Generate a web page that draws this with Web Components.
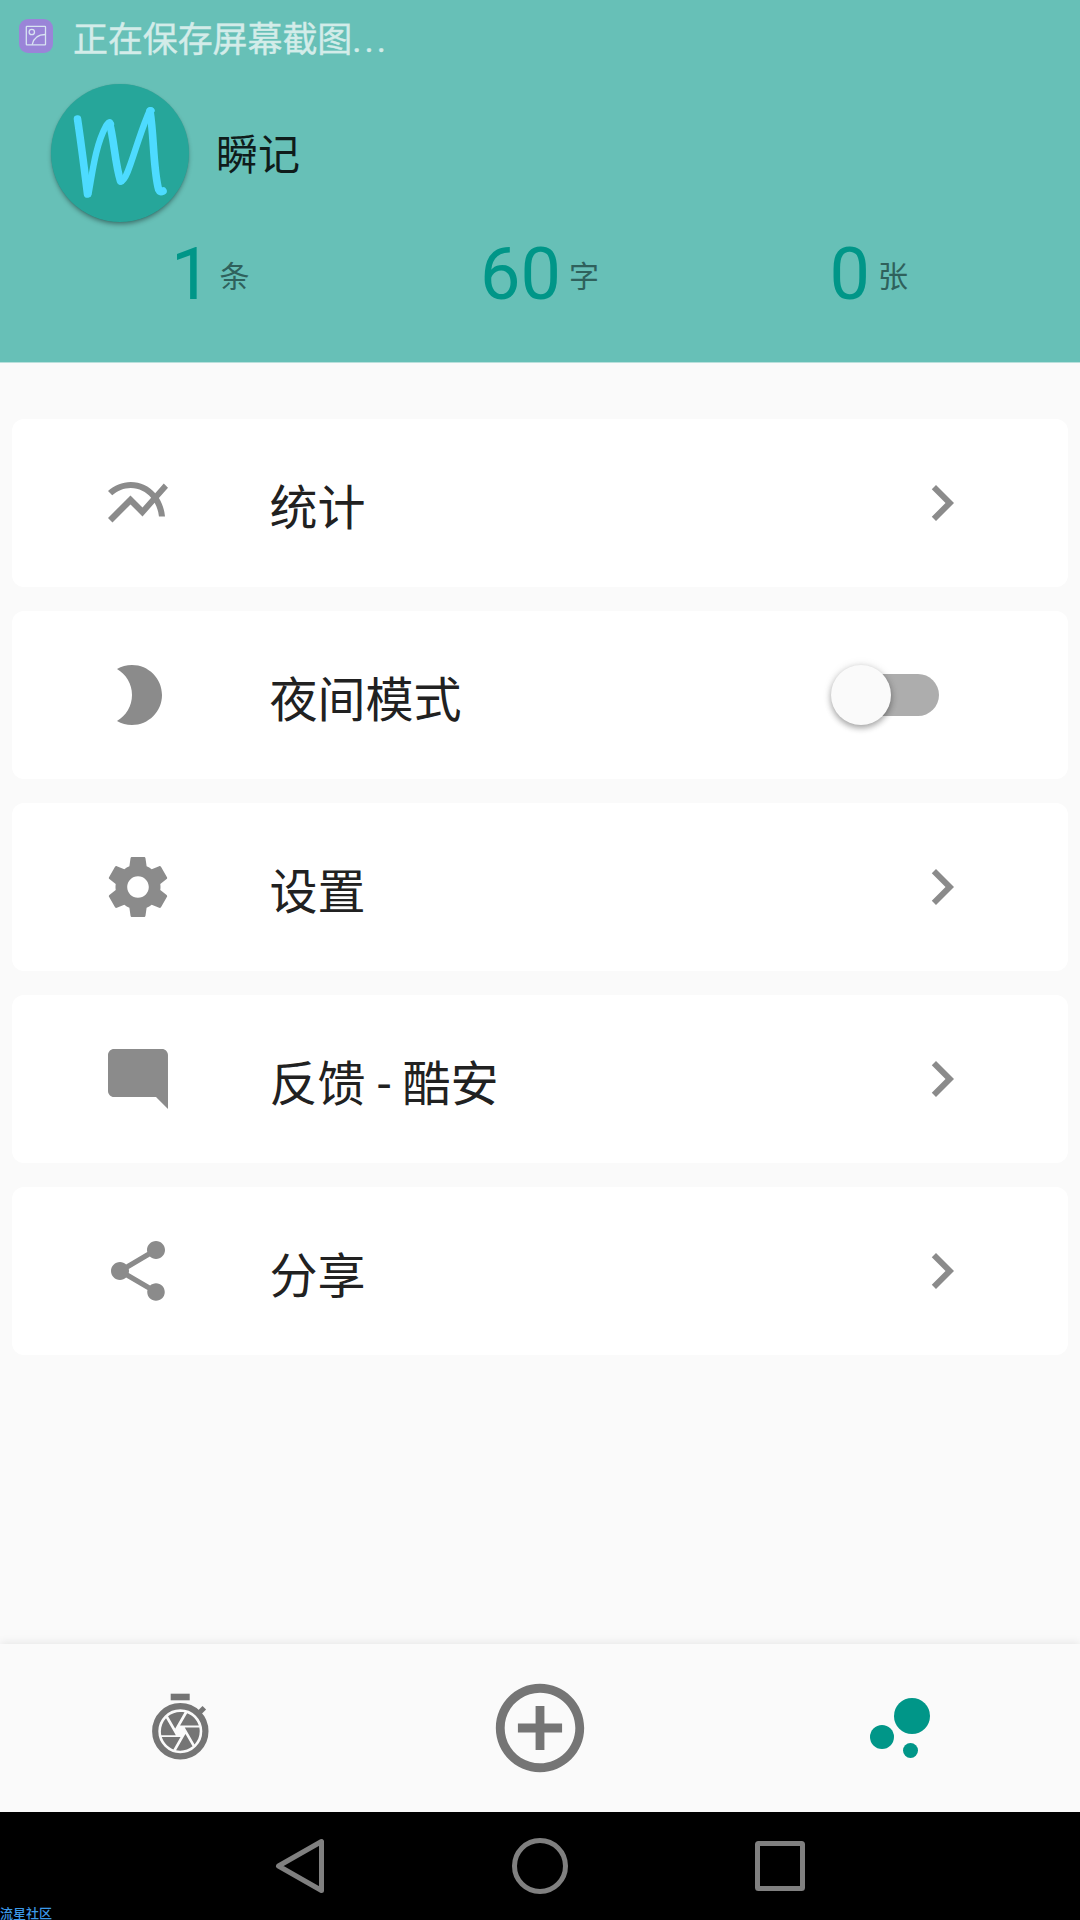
<!DOCTYPE html>
<html lang="zh-CN">
<head>
<meta charset="utf-8">
<title>瞬记</title>
<style>
  body {
    margin: 0;
    background: #fafafa;
    color: #212121;
    font-family: Roboto, "Noto Sans CJK SC", sans-serif;
    --color-primary: #009688;
    --color-header: #67c0b7;
    --color-icon: #8b8b8b;
  }
</style>
</head>
<body>
<app-screen>
  <profile-header slot="header" name="瞬记">
    <status-bar slot="status">正在保存屏幕截图...</status-bar>
    <stat-count value="1" unit="条"></stat-count>
    <stat-count value="60" unit="字"></stat-count>
    <stat-count value="0" unit="张"></stat-count>
  </profile-header>

  <menu-card icon="chart">统计</menu-card>
  <menu-card icon="moon">夜间模式<toggle-switch slot="action"></toggle-switch></menu-card>
  <menu-card icon="gear">设置</menu-card>
  <menu-card icon="comment">反馈 - 酷安</menu-card>
  <menu-card icon="share">分享</menu-card>

  <tab-bar slot="tabs"></tab-bar>
  <system-nav slot="system">流星社区</system-nav>
</app-screen>

<script>
const ICONS = {
  chart: '<path d="M22 6.92l-1.41-1.41-2.85 3.21C15.68 6.4 12.83 5 9.61 5 6.72 5 4.07 6.16 2 8l1.42 1.42C5.12 7.93 7.27 7 9.61 7c2.74 0 5.09 1.26 6.77 3.24l-2.88 3.24-4-4L2 16.99l1.5 1.5 6-6.01 4 4 4.05-4.55c.75 1.35 1.25 2.9 1.44 4.55H21c-.22-2.3-.95-4.39-2.04-6.14L22 6.92z"/>',
  moon: '<path d="M10 2c-1.82 0-3.53.5-5 1.35C7.99 5.08 10 8.3 10 12s-2.01 6.92-5 8.65C6.47 21.5 8.18 22 10 22c5.52 0 10-4.48 10-10S15.52 2 10 2z"/>',
  gear: '<path d="M19.43 12.98c.04-.32.07-.64.07-.98s-.03-.66-.07-.98l2.11-1.65c.19-.15.24-.42.12-.64l-2-3.46c-.12-.22-.39-.3-.61-.22l-2.49 1c-.52-.4-1.08-.73-1.69-.98l-.38-2.65C14.46 2.18 14.25 2 14 2h-4c-.25 0-.46.18-.49.42l-.38 2.65c-.61.25-1.17.59-1.69.98l-2.49-1c-.23-.09-.49 0-.61.22l-2 3.46c-.13.22-.07.49.12.64l2.11 1.65c-.04.32-.07.65-.07.98s.03.66.07.98l-2.11 1.65c-.19.15-.24.42-.12.64l2 3.46c.12.22.39.3.61.22l2.49-1c.52.4 1.08.73 1.69.98l.38 2.65c.03.24.24.42.49.42h4c.25 0 .46-.18.49-.42l.38-2.65c.61-.25 1.17-.59 1.69-.98l2.49 1c.23.09.49 0 .61-.22l2-3.46c.12-.22.07-.49-.12-.64l-2.11-1.65zM12 15.6c-1.98 0-3.6-1.62-3.6-3.6s1.62-3.6 3.6-3.6 3.6 1.62 3.6 3.6-1.62 3.6-3.6 3.6z"/>',
  comment: '<path d="M21.99 4c0-1.1-.89-2-1.99-2H4c-1.1 0-2 .9-2 2v12c0 1.1.9 2 2 2h14l4 4-.01-18z"/>',
  share: '<path d="M18 16.08c-.76 0-1.44.3-1.96.77L8.91 12.7c.05-.23.09-.46.09-.7s-.04-.47-.09-.7l7.05-4.11c.54.5 1.25.81 2.04.81 1.66 0 3-1.34 3-3s-1.34-3-3-3-3 1.34-3 3c0 .24.04.47.09.7L8.04 9.81C7.5 9.31 6.79 9 6 9c-1.66 0-3 1.34-3 3s1.34 3 3 3c.79 0 1.5-.31 2.04-.81l7.12 4.16c-.05.21-.08.43-.08.65 0 1.61 1.31 2.92 2.92 2.92 1.61 0 2.92-1.31 2.92-2.92s-1.31-2.92-2.92-2.92z"/>',
  chevron: '<path d="M10 6L8.59 7.41 13.17 12l-4.58 4.59L10 18l6-6z"/>'
};

class AppScreen extends HTMLElement {
  constructor() {
    super();
    this.attachShadow({ mode: 'open' });
  }

  connectedCallback() {
    this.shadowRoot.innerHTML = `
      <style>
        :host {
          display: flex;
          flex-direction: column;
          height: 1920px;
          overflow: hidden;
        }
        main {
          flex: 1;
          display: flex;
          flex-direction: column;
          gap: 24px;
          padding: 56px 12px 0;
        }
      </style>
      <slot name="header"></slot>
      <main><slot></slot></main>
      <slot name="tabs"></slot>
      <slot name="system"></slot>
    `;
  }
}

class StatusBar extends HTMLElement {
  constructor() {
    super();
    this.attachShadow({ mode: 'open' });
  }

  connectedCallback() {
    const text = this.textContent.trim();
    const label = text.replace(/\.+$/, '');
    const dots = text.slice(label.length);
    this.shadowRoot.innerHTML = `
      <style>
        :host {
          display: flex;
          align-items: center;
          gap: 20px;
          height: 72px;
          padding-left: 19px;
          color: #d3ece9;
          font-size: 35px;
          line-height: 64px;
        }
        svg { display: block; flex: none; }
        .text { padding-top: 9px; letter-spacing: -0.1px; -webkit-text-stroke: .4px #d3ece9; }
        .dots { letter-spacing: 3px; }
      </style>
      <svg width="34" height="34" viewBox="0 0 34 34">
        <rect width="34" height="34" rx="9" fill="#9a84d8"/>
        <g fill="none" stroke="#d8e4f2" stroke-width="1.3">
          <rect x="7.3" y="7.3" width="19.2" height="18.6" rx=".6"/>
          <circle cx="12.8" cy="13" r="2.7"/>
          <path d="M13.2 25.7C14.5 19.5 19 15.5 26.3 15.5"/>
        </g>
      </svg>
      <span class="text">${label}<span class="dots">${dots}</span></span>
    `;
  }
}

class ProfileHeader extends HTMLElement {
  constructor() {
    super();
    this.attachShadow({ mode: 'open' });
  }

  connectedCallback() {
    const name = this.getAttribute('name') || '';
    this.shadowRoot.innerHTML = `
      <style>
        :host {
          display: block;
          box-sizing: border-box;
          height: 363px;
          background: var(--color-header);
          border-bottom: 1px solid #b9e0dc;
        }
        .user {
          display: flex;
          align-items: center;
          gap: 27px;
          height: 138px;
          padding: 12px 0 0 51px;
        }
        .avatar {
          width: 138px;
          height: 138px;
          border-radius: 50%;
          background: #26a69a;
          box-shadow: 0 3px 5px -1px rgba(0, 0, 0, .42), 0 0 1px rgba(0, 0, 0, .15);
        }
        .avatar path {
          fill: none;
          stroke: #4ddbff;
          stroke-linecap: round;
          stroke-linejoin: round;
        }
        .name {
          color: #0f1c1b;
          font-size: 42px;
          line-height: 60px;
          padding-top: 6px;
        }
        .stats {
          display: grid;
          grid-template-columns: repeat(3, 1fr);
          padding: 11px 46px 0;
        }
      </style>
      <slot name="status"></slot>
      <div class="user">
        <svg class="avatar" viewBox="0 0 138 138">
          <path stroke-width="7.600" d="M26.5 35C30 58 33.500 86 36.500 110M58.500 39C63 55 64 80 69.500 97M99 27C103 52 102 80 107 103C107.500 107 109 108.500 112 107"/>
          <path stroke-width="6.400" d="M37.500 110C41 92 44 62 55 42C56.500 39.500 59 37.500 60 40M70 97.500C77 96 84 62 96 33C98 28 99 25 100.500 26.500"/>
        </svg>
        <div class="name">${name}</div>
      </div>
      <div class="stats"><slot></slot></div>
    `;
  }
}

class StatCount extends HTMLElement {
  constructor() {
    super();
    this.attachShadow({ mode: 'open' });
  }

  connectedCallback() {
    this.shadowRoot.innerHTML = `
      <style>
        :host {
          display: flex;
          justify-content: center;
          align-items: baseline;
          gap: 8px;
          line-height: 84px;
        }
        .value { color: var(--color-primary); font-size: 72px; margin-left: -1px; }
        .unit { color: #2f615c; font-size: 30px; line-height: 40px; position: relative; top: -12px; }
      </style>
      <span class="value">${this.getAttribute('value')}</span>
      <span class="unit">${this.getAttribute('unit')}</span>
    `;
  }
}

class MenuCard extends HTMLElement {
  constructor() {
    super();
    this.attachShadow({ mode: 'open' });
  }

  connectedCallback() {
    const icon = ICONS[this.getAttribute('icon')] || '';
    this.shadowRoot.innerHTML = `
      <style>
        :host {
          display: flex;
          align-items: center;
          box-sizing: border-box;
          height: 168px;
          padding: 0 90px;
          background: #fff;
          border-radius: 12px;
        }
        svg {
          display: block;
          width: 72px;
          height: 72px;
          fill: var(--color-icon);
        }
        .label {
          flex: 1;
          margin-left: 95.5px;
          padding-top: 11px;
          font-size: 48px;
          line-height: 72px;
        }
      </style>
      <svg viewBox="0 0 24 24">${icon}</svg>
      <span class="label"><slot></slot></span>
      <slot name="action"><svg viewBox="0 0 24 24">${ICONS.chevron}</svg></slot>
    `;
  }
}

class ToggleSwitch extends HTMLElement {
  constructor() {
    super();
    this.attachShadow({ mode: 'open' });
  }

  connectedCallback() {
    this.shadowRoot.innerHTML = `
      <style>
        :host {
          display: flex;
          align-items: center;
          width: 96px;
          height: 42px;
          margin-right: 39px;
          border-radius: 21px;
          background: #adadad;
        }
        .thumb {
          flex: none;
          width: 60px;
          height: 60px;
          margin-left: -12px;
          border-radius: 50%;
          background: #fafafa;
          box-shadow: 0 3px 6px rgba(0, 0, 0, .32), 0 0 10px rgba(0, 0, 0, .1);
        }
      </style>
      <div class="thumb"></div>
    `;
  }
}

class TabBar extends HTMLElement {
  constructor() {
    super();
    this.attachShadow({ mode: 'open' });
  }

  connectedCallback() {
    this.shadowRoot.innerHTML = `
      <style>
        :host {
          display: grid;
          grid-template-columns: repeat(3, 1fr);
          place-items: center;
          height: 168px;
          background: #fafafa;
          box-shadow: 0 -1px 9px rgba(0, 0, 0, .09);
          fill: #757575;
        }
        svg { display: block; }
        .active { fill: var(--color-primary); }
      </style>
      <!-- stopwatch with an aperture for its dial -->
      <svg width="72" height="72" viewBox="0 0 72 72">
        <rect x="26.700" y="1.700" width="19" height="6.600"/>
        <circle cx="36.300" cy="39.300" r="25.100" fill="none" stroke="#757575" stroke-width="6.200"/>
        <path d="M53 23l7.300-7.300" stroke="#757575" stroke-width="5"/>
        <g transform="translate(36.300 39.300) scale(1.940) translate(-12 -12)">
          <path d="M9.4 10.5l4.77-8.26C13.47 2.09 12.75 2 12 2c-2.4 0-4.6.85-6.32 2.25l3.66 6.35.06-.1zM21.54 9c-.92-2.92-3.15-5.26-6-6.34L11.88 9h9.66zm.26 1h-7.49l.29.5 4.76 8.25C21 16.97 22 14.61 22 12c0-.69-.07-1.35-.2-2zM8.54 12l-3.9-6.75C3.01 7.03 2 9.39 2 12c0 .69.07 1.35.2 2h7.49l-1.15-2zm-6.08 3c.92 2.92 3.15 5.26 6 6.34L12.12 15H2.46zm11.27 0l-3.9 6.76c.7.15 1.42.24 2.17.24 2.4 0 4.6-.85 6.32-2.25l-3.66-6.35-.93 1.6z"/>
        </g>
      </svg>
      <svg width="106" height="106" viewBox="0 0 24 24">
        <path d="M13 7h-2v4H7v2h4v4h2v-4h4v-2h-4V7zm-1-5C6.48 2 2 6.48 2 12s4.480 10 10 10 10-4.480 10-10S17.520 2 12 2zm0 18c-4.410 0-8-3.590-8-8s3.590-8 8-8 8 3.590 8 8-3.590 8-8 8z"/>
      </svg>
      <svg class="active" width="72" height="72" viewBox="0 0 24 24">
        <circle cx="16" cy="8" r="6"/>
        <circle cx="6" cy="15" r="4"/>
        <circle cx="15.500" cy="19.500" r="2.500"/>
      </svg>
    `;
  }
}

class SystemNav extends HTMLElement {
  constructor() {
    super();
    this.attachShadow({ mode: 'open' });
  }

  connectedCallback() {
    this.shadowRoot.innerHTML = `
      <style>
        :host {
          display: flex;
          justify-content: center;
          align-items: center;
          gap: 180px;
          position: relative;
          height: 108px;
          background: #000;
        }
        svg {
          display: block;
          fill: none;
          stroke: #808080;
          stroke-width: 5;
          stroke-linejoin: round;
        }
        .mark {
          position: absolute;
          left: 0;
          bottom: -3px;
          color: #3d9bea;
          font-size: 13px;
          font-weight: 500;
          line-height: 18px;
        }
      </style>
      <svg width="60" height="60" viewBox="0 0 60 60"><path d="M51.500 5.500v49L8.500 30z"/></svg>
      <svg width="60" height="60" viewBox="0 0 60 60"><circle cx="30" cy="30" r="25.500"/></svg>
      <svg width="60" height="60" viewBox="0 0 60 60"><rect x="7.500" y="7.500" width="45" height="45" rx="1"/></svg>
      <span class="mark"><slot></slot></span>
    `;
  }
}

customElements.define('app-screen', AppScreen);
customElements.define('status-bar', StatusBar);
customElements.define('profile-header', ProfileHeader);
customElements.define('stat-count', StatCount);
customElements.define('menu-card', MenuCard);
customElements.define('toggle-switch', ToggleSwitch);
customElements.define('tab-bar', TabBar);
customElements.define('system-nav', SystemNav);
</script>
</body>
</html>
